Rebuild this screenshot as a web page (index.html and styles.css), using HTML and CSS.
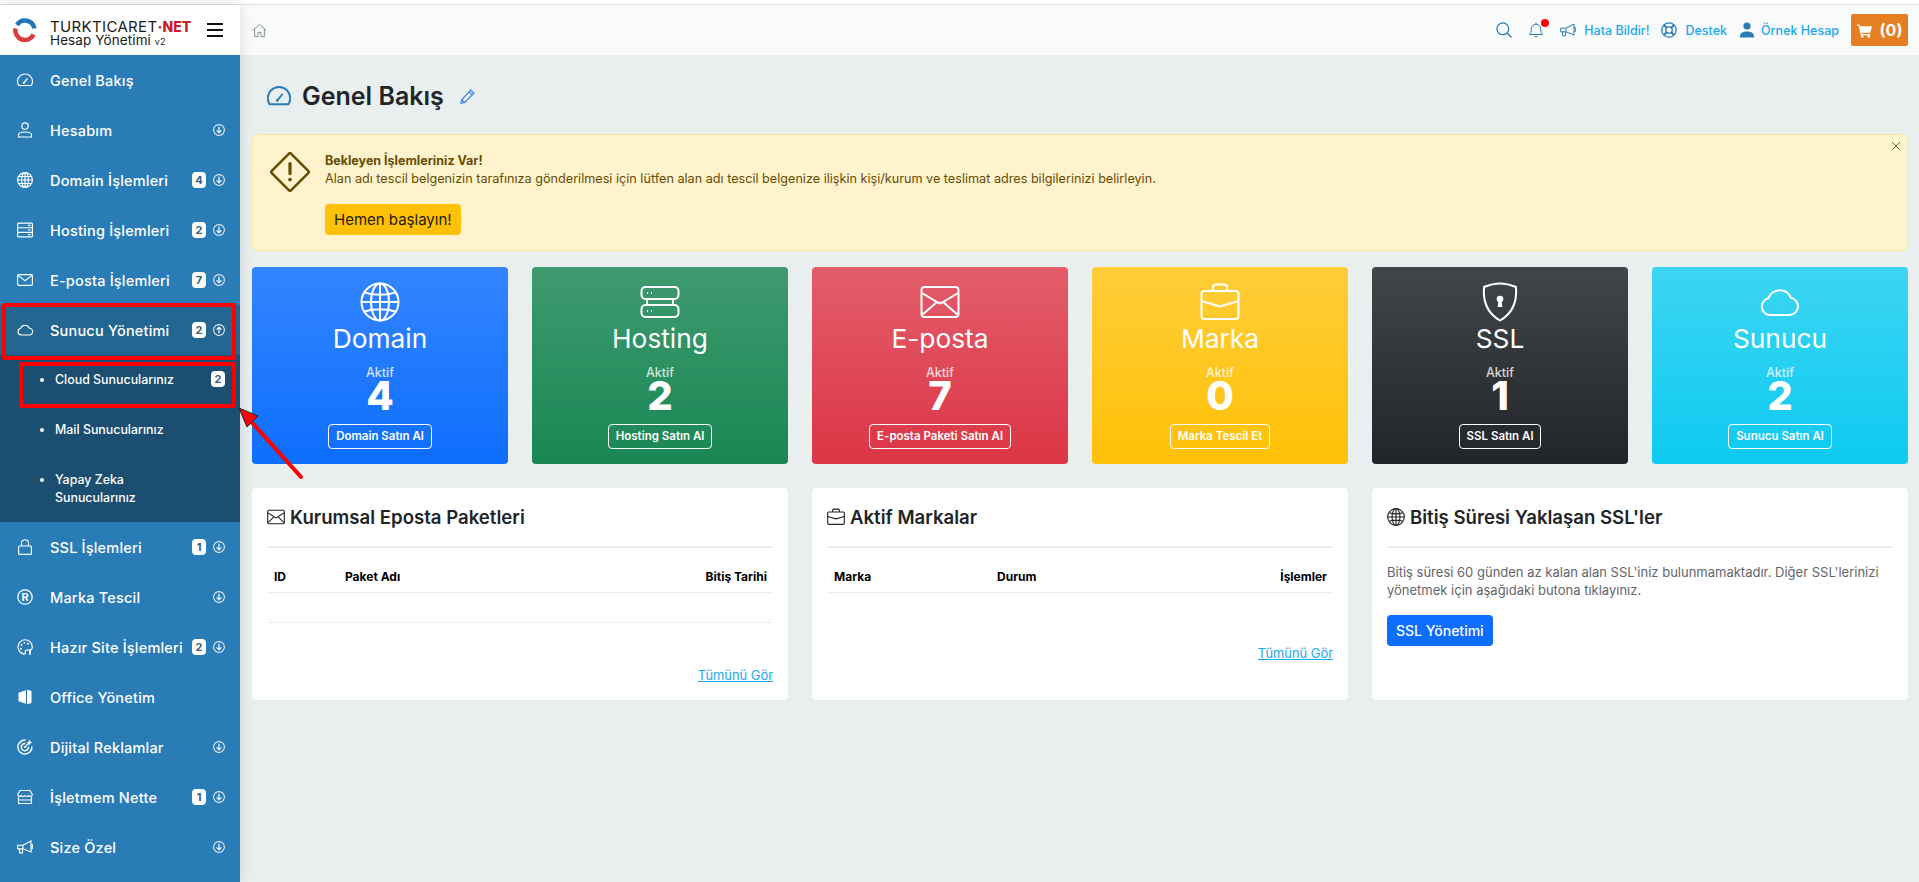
FILE: index.html
```html
<!DOCTYPE html>
<html lang="tr">
<head>
    <meta charset="utf-8">
    <title>Genel Bakış</title>
    <link rel="stylesheet" href="styles.css">
</head>
<body>
    <svg class="sprite" xmlns="http://www.w3.org/2000/svg">
        <symbol id="i-gauge" viewBox="0 0 16 16"><path d="M1.7 13.500h12.600A7.500 7.500 0 0 0 15.500 9.500 7.500 7.500 0 0 0 .5 9.500a7.500 7.500 0 0 0 1.200 4z"/><path d="M6.600 11.200 10.500 6.500" stroke-width="1.300"/><circle cx="6.800" cy="11" r=".9" class="solid"/></symbol>
        <symbol id="i-person" viewBox="0 0 16 16"><circle cx="8" cy="4" r="3.200"/><path d="M1.500 15v-2c0-2 2-3 6.500-3s6.500 1 6.500 3v2z"/></symbol>
        <symbol id="i-globe" viewBox="0 0 16 16"><circle cx="8" cy="8" r="7.400"/><ellipse cx="8" cy="8" rx="3.400" ry="7.400"/><path d="M8 .6v14.800M.6 8h14.800M1.700 4.500h12.600M1.700 11.500h12.600"/></symbol>
        <symbol id="i-rack" viewBox="0 0 16 16"><rect x=".6" y="1.100" width="14.800" height="13.800" rx="1"/><path d="M.6 5.700h14.800M.6 10.300h14.800M11 3.400h2.500M11 8h2.500M11 12.600h2.500"/></symbol>
        <symbol id="i-mail" viewBox="0 0 16 16"><rect x=".6" y="2.600" width="14.800" height="10.800" rx="1.200"/><path d="M1 3.400 8 8.800l7-5.400"/></symbol>
        <symbol id="i-mailx" viewBox="0 0 16 16"><rect x=".6" y="2" width="14.800" height="12" rx="1"/><path d="M1 4.500 8 8.800l7-4.300M1 13l5.300-5.300M15 13 9.700 7.700"/></symbol>
        <symbol id="i-cloud" viewBox="0 0 16 16"><path d="M4.200 13A3.400 3.400 0 0 1 3.700 6.300 4.600 4.600 0 0 1 12.300 6.200 3.400 3.400 0 0 1 12 13z"/></symbol>
        <symbol id="i-lock" viewBox="0 0 16 16"><rect x="1.600" y="7" width="12.800" height="8.400" rx="1"/><path d="M4.500 7V4.200a3.500 3.500 0 0 1 7 0V7"/></symbol>
        <symbol id="i-reg" viewBox="0 0 16 16"><circle cx="8" cy="8" r="7.200" stroke-width="1.300"/><text x="8" y="11.800" text-anchor="middle" class="reg-letter">R</text></symbol>
        <symbol id="i-palette" viewBox="0 0 16 16"><path d="M8 .8A7.200 7.200 0 0 0 7 15.100c1.200.1 1.600-.8 1.300-1.800-.4-1.400.4-2.300 1.700-2.300h2.500c1.800 0 2.900-1.200 2.800-3A7.200 7.200 0 0 0 8 .8z"/><circle cx="4.500" cy="6" r="1" class="solid"/><circle cx="7.500" cy="3.800" r="1" class="solid"/><circle cx="11" cy="4.800" r="1" class="solid"/><circle cx="3.800" cy="9.800" r="1" class="solid"/><path d="M13 11v4.500" stroke-width="2"/></symbol>
        <symbol id="i-office" viewBox="0 0 16 16"><path class="solid" d="M1.500 3.800 9 1.200v13.600l-7.500-2.600z"/><path class="solid" d="M10 .8 14.500 2v12L10 15.200z"/></symbol>
        <symbol id="i-target" viewBox="0 0 16 16"><path stroke-width="1.400" d="M8.500 1.100A7 7 0 1 0 14.900 7.500"/><path stroke-width="1.400" d="M8.300 4.500A3.600 3.600 0 1 0 11.500 7.700"/><circle cx="8" cy="8" r="1.100" class="solid"/><path d="M8 8l4-4" stroke-width="1.300"/><path class="solid" d="M12.500.5 13.300 2.700 15.500 3.500 13.300 4.300 12.500 6.500 11.700 4.300 9.500 3.500 11.700 2.700z"/></symbol>
        <symbol id="i-shop" viewBox="0 0 16 16"><path d="M3 1.500h10l2.300 4c0 2-2.400 2.300-3.600 1-1 1.300-2.700 1.300-3.700 0-1 1.300-2.700 1.300-3.700 0C3.100 7.800.7 7.500.7 5.500z"/><path d="M1.500 7.800v6.700h13V7.800M1.500 11h13"/></symbol>
        <symbol id="i-horn" viewBox="0 0 16 16"><path d="M.7 6.200h5.200L14 2v11L5.900 9.800H.7zM5.900 6.200v3.600M14 5.500h1.300v4H14M2.500 9.800v4h3V10"/></symbol>
        <symbol id="i-down" viewBox="0 0 16 16"><circle cx="8" cy="8" r="7.200"/><path stroke-width="1.800" d="M8 3.800v8M4.700 8.500 8 11.800l3.300-3.300"/></symbol>
        <symbol id="i-up" viewBox="0 0 16 16"><circle cx="8" cy="8" r="7.200"/><path stroke-width="1.800" d="M8 12.200v-8M4.700 7.500 8 4.200l3.300 3.300"/></symbol>
        <symbol id="i-home" viewBox="0 0 16 16"><path d="M.8 8 8 1.500 15.200 8M2.800 6.500v8h3.600v-4.500h3.200v4.500h3.600v-8"/></symbol>
        <symbol id="i-search" viewBox="0 0 16 16"><circle cx="6.800" cy="6.800" r="5.900" stroke-width="1.300"/><path stroke-width="1.500" d="m11 11 4.500 4.500"/></symbol>
        <symbol id="i-bell" viewBox="0 0 16 16"><path d="M1.500 12.500c1.200-1.200 1.800-2.500 1.800-5.500A4.700 4.700 0 0 1 8 2.200 4.700 4.700 0 0 1 12.700 7c0 3 .6 4.300 1.800 5.500zM6.300 14.800h3.400M8 .6v1.600"/></symbol>
        <symbol id="i-buoy" viewBox="0 0 16 16"><circle cx="8" cy="8" r="7.200" stroke-width="1.300"/><circle cx="8" cy="8" r="3.200" stroke-width="1.300"/><path stroke-width="2" d="m2.900 2.900 2.800 2.800M13.100 2.900l-2.800 2.800M2.900 13.100l2.800-2.800M13.100 13.100l-2.800-2.800"/></symbol>
        <symbol id="i-user" viewBox="0 0 16 16"><circle cx="8" cy="4" r="3.600" class="solid"/><path class="solid" d="M.8 15.500c0-4 2.500-6 7.200-6s7.200 2 7.200 6z"/></symbol>
        <symbol id="i-cart" viewBox="0 0 16 16"><path class="solid" d="M0 1.500h2.800l.5 2H16l-1.800 6.800H5l.3 1.300h9v1.400H4.100L1.800 2.900H0z"/><circle cx="5.500" cy="14.300" r="1.400" class="solid"/><circle cx="12.500" cy="14.300" r="1.400" class="solid"/></symbol>
        <symbol id="i-pencil" viewBox="0 0 16 16"><path d="M11.500 1.200 14.800 4.500 5 14.300l-4 .9.900-4zM9.800 3l3.300 3.300M2 11.200 4.800 14"/></symbol>
        <symbol id="i-x" viewBox="0 0 10 10"><path d="m1 1 8 8M9 1 1 9"/></symbol>
        <symbol id="i-warn" viewBox="0 0 16 16"><rect x="2.500" y="2.500" width="11" height="11" rx=".7" transform="rotate(45 8 8)"/><path stroke-width="1.300" stroke-linecap="round" d="M8 4.600v4"/><circle cx="8" cy="11" r=".75" class="solid"/></symbol>
        <symbol id="i-globe-lg" viewBox="0 0 40 40"><circle cx="20" cy="20" r="18.500"/><ellipse cx="20" cy="20" rx="9" ry="18.500"/><path d="M20 1.500v37M1.500 20h37M4.500 10.500c9 3 22 3 31 0M4.500 29.500c9-3 22-3 31 0"/></symbol>
        <symbol id="i-server-lg" viewBox="0 0 40 40"><rect x="1.500" y="5" width="37" height="12" rx="4"/><rect x="1.500" y="23" width="37" height="12" rx="4"/><path d="M7 17v6M33 17v6M7 11h1M11 11h1M7 29h1M11 29h1"/></symbol>
        <symbol id="i-mail-lg" viewBox="0 0 40 40"><rect x="1.500" y="5" width="37" height="30" rx="3"/><path d="M2 11l15 9 3 1.500 3-1.500 15-9M2 33l15-13M38 33 23 20"/></symbol>
        <symbol id="i-case-lg" viewBox="0 0 40 40"><rect x="1.500" y="9" width="37" height="28" rx="3"/><path d="M13 9V5a2.500 2.500 0 0 1 2.500-2.500h9A2.500 2.500 0 0 1 27 5v4M1.500 19 20 24.500 38.500 19"/></symbol>
        <symbol id="i-shield-lg" viewBox="0 0 40 40"><path d="M20 1.500c5 0 11 1.500 16 3.500 1 12-1 25-16 33.500C5 30 3 17 4 5c5-2 11-3.500 16-3.500z"/><circle cx="20" cy="17" r="3.300" class="solid"/><path class="solid" d="M18.600 18h2.800l1 7h-4.800z"/></symbol>
        <symbol id="i-cloud-lg" viewBox="0 0 40 40"><path d="M10 33a8.500 8.500 0 0 1-1.500-16.800A12 12 0 0 1 31 15.800 8.700 8.700 0 0 1 30 33z"/></symbol>
        <symbol id="i-case" viewBox="0 0 16 16"><rect x=".6" y="3.600" width="14.800" height="11" rx="1"/><path d="M5 3.600V2a1 1 0 0 1 1-1h4a1 1 0 0 1 1 1v1.600M.6 7.600 8 9.600l7.400-2"/></symbol>
        <symbol id="i-globe-sm" viewBox="0 0 16 16"><circle cx="8" cy="8" r="7.400"/><ellipse cx="8" cy="8" rx="3.500" ry="7.400"/><path d="M8 .6v14.800M.6 8h14.800M2 4.200c3.500 1.200 8.500 1.200 12 0M2 11.800c3.500-1.200 8.500-1.200 12 0"/></symbol>
    </svg>

    <div class="top-strip"></div>

    <div class="layout">
        <aside class="sidebar">
            <div class="brand">
                <svg class="brand-mark" viewBox="0 0 24 24">
                    <path class="mark-blue" d="M4 7A9.500 9.500 0 0 1 21.400 10.500"/>
                    <path class="mark-red" d="M20.500 16.500A9.500 9.500 0 0 1 2.600 10.500"/>
                </svg>
                <div class="brand-text">
                    <div class="brand-name">TURKTICARET<b>·NET</b></div>
                    <div class="brand-sub">Hesap Yönetimi <small>v2</small></div>
                </div>
                <div class="burger"><i></i><i></i><i></i></div>
            </div>

            <nav class="nav">
                <a class="nav-item"><svg class="nav-icon"><use href="#i-gauge"/></svg><span class="nav-label">Genel Bakış</span></a>
                <a class="nav-item"><svg class="nav-icon"><use href="#i-person"/></svg><span class="nav-label">Hesabım</span><svg class="nav-arrow"><use href="#i-down"/></svg></a>
                <a class="nav-item"><svg class="nav-icon"><use href="#i-globe"/></svg><span class="nav-label">Domain İşlemleri</span><span class="badge">4</span><svg class="nav-arrow"><use href="#i-down"/></svg></a>
                <a class="nav-item"><svg class="nav-icon"><use href="#i-rack"/></svg><span class="nav-label">Hosting İşlemleri</span><span class="badge">2</span><svg class="nav-arrow"><use href="#i-down"/></svg></a>
                <a class="nav-item"><svg class="nav-icon"><use href="#i-mail"/></svg><span class="nav-label">E-posta İşlemleri</span><span class="badge">7</span><svg class="nav-arrow"><use href="#i-down"/></svg></a>
                <a class="nav-item active"><svg class="nav-icon"><use href="#i-cloud"/></svg><span class="nav-label">Sunucu Yönetimi</span><span class="badge">2</span><svg class="nav-arrow"><use href="#i-up"/></svg></a>
                <ul class="subnav">
                    <li><span>Cloud Sunucularınız</span><span class="badge">2</span></li>
                    <li><span>Mail Sunucularınız</span></li>
                    <li><span>Yapay Zeka<br>Sunucularınız</span></li>
                </ul>
                <a class="nav-item"><svg class="nav-icon"><use href="#i-lock"/></svg><span class="nav-label">SSL İşlemleri</span><span class="badge">1</span><svg class="nav-arrow"><use href="#i-down"/></svg></a>
                <a class="nav-item"><svg class="nav-icon"><use href="#i-reg"/></svg><span class="nav-label">Marka Tescil</span><svg class="nav-arrow"><use href="#i-down"/></svg></a>
                <a class="nav-item"><svg class="nav-icon"><use href="#i-palette"/></svg><span class="nav-label">Hazır Site İşlemleri</span><span class="badge">2</span><svg class="nav-arrow"><use href="#i-down"/></svg></a>
                <a class="nav-item"><svg class="nav-icon"><use href="#i-office"/></svg><span class="nav-label">Office Yönetim</span></a>
                <a class="nav-item"><svg class="nav-icon"><use href="#i-target"/></svg><span class="nav-label">Dijital Reklamlar</span><svg class="nav-arrow"><use href="#i-down"/></svg></a>
                <a class="nav-item"><svg class="nav-icon"><use href="#i-shop"/></svg><span class="nav-label">İşletmem Nette</span><span class="badge">1</span><svg class="nav-arrow"><use href="#i-down"/></svg></a>
                <a class="nav-item"><svg class="nav-icon"><use href="#i-horn"/></svg><span class="nav-label">Size Özel</span><svg class="nav-arrow"><use href="#i-down"/></svg></a>
            </nav>
        </aside>

        <div class="main">
            <header class="topbar">
                <svg class="home-icon"><use href="#i-home"/></svg>
                <div class="top-actions">
                    <svg class="top-icon search"><use href="#i-search"/></svg>
                    <span class="bell"><svg class="top-icon"><use href="#i-bell"/></svg><i class="bell-dot"></i></span>
                    <a class="top-link"><svg class="top-icon"><use href="#i-horn"/></svg>Hata Bildir!</a>
                    <a class="top-link"><svg class="top-icon"><use href="#i-buoy"/></svg>Destek</a>
                    <a class="top-link user-link"><svg class="top-icon"><use href="#i-user"/></svg>Örnek Hesap</a>
                    <a class="cart"><svg class="cart-icon"><use href="#i-cart"/></svg>(0)</a>
                </div>
            </header>

            <div class="content">
                <div class="page-title">
                    <svg class="title-icon"><use href="#i-gauge"/></svg>
                    <h1>Genel Bakış</h1>
                    <svg class="title-edit"><use href="#i-pencil"/></svg>
                </div>

                <div class="notice">
                    <svg class="notice-icon"><use href="#i-warn"/></svg>
                    <div class="notice-body">
                        <strong>Bekleyen İşlemleriniz Var!</strong>
                        <p>Alan adı tescil belgenizin tarafınıza gönderilmesi için lütfen alan adı tescil belgenize ilişkin kişi/kurum ve teslimat adres bilgilerinizi belirleyin.</p>
                        <a class="notice-btn">Hemen başlayın!</a>
                    </div>
                    <svg class="notice-close"><use href="#i-x"/></svg>
                </div>

                <div class="stats">
                    <div class="stat blue">
                        <svg class="stat-icon"><use href="#i-globe-lg"/></svg>
                        <div class="stat-title">Domain</div>
                        <div class="stat-sub">Aktif</div>
                        <div class="stat-num">4</div>
                        <a class="stat-btn">Domain Satın Al</a>
                    </div>
                    <div class="stat green">
                        <svg class="stat-icon"><use href="#i-server-lg"/></svg>
                        <div class="stat-title">Hosting</div>
                        <div class="stat-sub">Aktif</div>
                        <div class="stat-num">2</div>
                        <a class="stat-btn">Hosting Satın Al</a>
                    </div>
                    <div class="stat red">
                        <svg class="stat-icon"><use href="#i-mail-lg"/></svg>
                        <div class="stat-title">E-posta</div>
                        <div class="stat-sub">Aktif</div>
                        <div class="stat-num">7</div>
                        <a class="stat-btn">E-posta Paketi Satın Al</a>
                    </div>
                    <div class="stat yellow">
                        <svg class="stat-icon"><use href="#i-case-lg"/></svg>
                        <div class="stat-title">Marka</div>
                        <div class="stat-sub">Aktif</div>
                        <div class="stat-num">0</div>
                        <a class="stat-btn">Marka Tescil Et</a>
                    </div>
                    <div class="stat dark">
                        <svg class="stat-icon"><use href="#i-shield-lg"/></svg>
                        <div class="stat-title">SSL</div>
                        <div class="stat-sub">Aktif</div>
                        <div class="stat-num">1</div>
                        <a class="stat-btn">SSL Satın Al</a>
                    </div>
                    <div class="stat cyan">
                        <svg class="stat-icon"><use href="#i-cloud-lg"/></svg>
                        <div class="stat-title">Sunucu</div>
                        <div class="stat-sub">Aktif</div>
                        <div class="stat-num">2</div>
                        <a class="stat-btn">Sunucu Satın Al</a>
                    </div>
                </div>

                <div class="panels">
                    <section class="panel">
                        <h2><svg class="panel-icon"><use href="#i-mailx"/></svg>Kurumsal Eposta Paketleri</h2>
                        <table class="grid-table packages">
                            <thead><tr><th>ID</th><th>Paket Adı</th><th class="right">Bitiş Tarihi</th></tr></thead>
                            <tbody><tr class="empty-row"><td colspan="3"></td></tr></tbody>
                        </table>
                        <a class="see-all">Tümünü Gör</a>
                    </section>
                    <section class="panel">
                        <h2><svg class="panel-icon"><use href="#i-case"/></svg>Aktif Markalar</h2>
                        <table class="grid-table brands">
                            <thead><tr><th>Marka</th><th>Durum</th><th class="right">İşlemler</th></tr></thead>
                            <tbody><tr class="blank-row"><td colspan="3"></td></tr></tbody>
                        </table>
                        <a class="see-all">Tümünü Gör</a>
                    </section>
                    <section class="panel">
                        <h2><svg class="panel-icon"><use href="#i-globe-sm"/></svg>Bitiş Süresi Yaklaşan SSL'ler</h2>
                        <p class="panel-text">Bitiş süresi 60 günden az kalan alan SSL'iniz bulunmamaktadır. Diğer SSL'lerinizi yönetmek için aşağıdaki butona tıklayınız.</p>
                        <a class="primary-btn">SSL Yönetimi</a>
                    </section>
                </div>
            </div>
        </div>
    </div>

    <!-- red marks drawn over the screenshot -->
    <div class="mark mark-one"></div>
    <div class="mark mark-two"></div>
    <svg class="mark-arrow" viewBox="0 0 80 80">
        <path d="M63 71 9 11" stroke="#f00" stroke-width="4" stroke-linecap="round" fill="none"/>
        <path d="M1 2 20 10 9 21z" fill="#f00"/>
    </svg>
</body>
</html>
```

FILE: styles.css
```css
* {
    box-sizing: border-box;
}

html, body {
    height: 100%;
}

body {
    margin: 0;
    font-family: Inter, "Noto Sans", sans-serif;
    color: #212529;
    background: #e9efef;
    overflow: hidden;
}

a {
    text-decoration: none;
}

.sprite {
    display: none;
}

svg {
    fill: none;
    stroke: currentColor;
    stroke-width: 1;
    flex-shrink: 0;
}

.solid {
    fill: currentColor;
    stroke: none;
}

.reg-letter {
    font: 700 11px Inter, sans-serif;
    fill: currentColor;
    stroke: none;
}

.top-strip {
    height: 5px;
    background: #fff;
    border-bottom: 1px solid #dfe1e1;
}

.layout {
    display: flex;
    height: 877px;
}

/* sidebar */
.sidebar {
    width: 240px;
    flex-shrink: 0;
    background: #2a7cb6;
    box-shadow: 0 0 12px rgba(0, 0, 0, .14);
    position: relative;
}

.brand {
    height: 50px;
    background: #fff;
    display: flex;
    align-items: center;
    padding: 0 17px 0 13px;
}

.brand-mark {
    width: 24px;
    height: 24px;
    margin-right: 13px;
}

.mark-blue {
    stroke: #1f76bb;
    stroke-width: 4.500;
}

.mark-red {
    stroke: #dd3c3f;
    stroke-width: 4.500;
}

.brand-text {
    flex: 1;
    padding-top: 7px;
    color: #1a1a1a;
}

.brand-name {
    font-size: 15px;
    line-height: 15px;
    letter-spacing: .35px;
    white-space: nowrap;
}

.brand-name b {
    color: #c8202a;
    font-size: 14px;
    font-weight: 800;
    letter-spacing: 0;
}

.brand-sub {
    font-size: 13.500px;
    line-height: 14px;
    letter-spacing: .1px;
    margin-top: -1px;
}

.brand-sub small {
    font-size: 9px;
}

.burger {
    width: 16px;
}

.burger i {
    display: block;
    height: 2px;
    background: #111;
    margin: 4px 0;
}

.nav-item {
    display: flex;
    align-items: center;
    height: 50px;
    padding: 0 15px 0 17px;
    color: #fff;
}

.nav-item.active {
    background: #246692;
}

.nav-icon {
    width: 16px;
    height: 16px;
    margin-right: 17px;
    stroke-width: 1.150;
}

.nav-label {
    flex: 1;
    padding-top: 1px;
    font-size: 14.500px;
    font-weight: 500;
    letter-spacing: .2px;
    white-space: nowrap;
}

.nav-arrow {
    width: 12px;
    height: 12px;
    margin-left: 7px;
    stroke-width: 1.400;
    opacity: .9;
}

.badge {
    min-width: 14px;
    height: 16px;
    padding: 0 3px;
    border-radius: 4px;
    background: #fff;
    color: #3a5d78;
    font-size: 11px;
    font-weight: 700;
    line-height: 16px;
    text-align: center;
}

.subnav {
    margin: 0;
    padding: 0 15px 0 0;
    list-style: none;
    background: #1b4e71;
    color: #fff;
    font-size: 12.400px;
    font-weight: 500;
}

.subnav li {
    display: flex;
    justify-content: space-between;
    padding: 16px 0 16px 55px;
    line-height: 18px;
    position: relative;
}

.subnav li:last-child {
    padding-bottom: 15px;
}

.subnav li::before {
    content: "";
    position: absolute;
    left: 40px;
    top: 23px;
    width: 4px;
    height: 4px;
    border-radius: 50%;
    background: #fff;
}

/* top bar */
.main {
    flex: 1;
    min-width: 0;
}

.topbar {
    height: 50px;
    background: #f9fbfb;
    display: flex;
    align-items: center;
    justify-content: space-between;
    padding: 0 11px 0 12px;
}

.home-icon {
    width: 15px;
    height: 15px;
    color: #7d8589;
}

.top-actions {
    display: flex;
    align-items: center;
}

.top-icon {
    width: 16px;
    height: 16px;
    color: #2a7cb6;
}

.search {
    margin-right: 16px;
}

.bell {
    position: relative;
    display: flex;
    margin-right: 16px;
}

.bell-dot {
    position: absolute;
    top: -3px;
    right: -5px;
    width: 8px;
    height: 8px;
    border-radius: 50%;
    background: #f00;
}

.top-link {
    display: flex;
    align-items: center;
    gap: 8px;
    margin-right: 12px;
    font-size: 12.500px;
    font-weight: 500;
    color: #1ea7f0;
    white-space: nowrap;
}

.user-link {
    gap: 6px;
}

.cart {
    display: flex;
    align-items: center;
    justify-content: center;
    gap: 8px;
    width: 57px;
    height: 32px;
    border-radius: 2px;
    background: #e67e22;
    color: #fff;
    font-size: 16px;
    font-weight: 700;
}

.cart-icon {
    width: 15px;
    height: 15px;
    color: #fff;
}

/* content */
.content {
    padding: 0 11px 0 12px;
}

.page-title {
    display: flex;
    align-items: center;
    height: 79px;
    padding: 3px 0 0 15px;
}

.title-icon {
    width: 24px;
    height: 24px;
    color: #2a7cb6;
    margin-right: 11px;
    stroke-width: 1.300;
}

.page-title h1 {
    margin: 0;
    font-size: 25px;
    font-weight: 600;
    line-height: 30px;
}

.title-edit {
    width: 15px;
    height: 15px;
    color: #3d7ff5;
    margin-left: 16px;
    stroke-width: 1.300;
}

.notice {
    display: flex;
    position: relative;
    height: 117px;
    padding: 17px 15px 0 17px;
    background: #fff3cd;
    border: 1px solid #ffe69c;
    border-radius: 5px;
    color: #664d03;
}

.notice-icon {
    width: 40px;
    height: 40px;
    margin-right: 15px;
}

.notice-body {
    font-size: 12.650px;
    line-height: 18px;
}

.notice-body strong {
    display: block;
    font-weight: 700;
    font-size: 12.500px;
}

.notice-body p {
    margin: 0 0 16px;
}

.notice-btn {
    display: inline-block;
    height: 31px;
    padding: 0 9px;
    border-radius: 4px;
    background: #ffc107;
    color: #1d1a05;
    font-size: 15px;
    line-height: 31px;
}

.notice-close {
    position: absolute;
    top: 6px;
    right: 6px;
    width: 10px;
    height: 10px;
    color: #5c5c4c;
}

.stats {
    display: grid;
    grid-template-columns: repeat(6, 1fr);
    gap: 24px;
    margin-top: 16px;
}

.stat {
    height: 197px;
    border-radius: 4px;
    padding-top: 15px;
    color: #fff;
    text-align: center;
}

.stat.blue { background: linear-gradient(#3385ff, #0d6efd); }
.stat.green { background: linear-gradient(#3f9a6f, #198754); }
.stat.red { background: linear-gradient(#e35d6a, #dc3545); }
.stat.yellow { background: linear-gradient(#ffcd39, #ffc107); }
.stat.dark { background: linear-gradient(#424649, #212529); }
.stat.cyan { background: linear-gradient(#3dd5f3, #0dcaf0); }

.stat-icon {
    display: block;
    width: 40px;
    height: 40px;
    margin: 0 auto;
    stroke-width: 2;
}

.stat-title {
    font-size: 26.300px;
    line-height: 36px;
    font-weight: 400;
    margin-top: -1px;
}

.stat-sub {
    margin-top: 8px;
    font-size: 12.500px;
    line-height: 16px;
    font-weight: 500;
    opacity: .8;
}

.stat-num {
    font-size: 40px;
    line-height: 30px;
    font-weight: 800;
}

.stat-btn {
    display: block;
    width: max-content;
    height: 25px;
    margin: 13px auto 0;
    padding: 0 7px;
    border: 1px solid #fff;
    border-radius: 4px;
    font-size: 11.500px;
    line-height: 23px;
    font-weight: 600;
    color: #fff;
}

.panels {
    display: grid;
    grid-template-columns: repeat(3, 1fr);
    gap: 24px;
    margin-top: 24px;
}

.panel {
    height: 212px;
    padding: 15px;
    border-radius: 5px;
    background: #fff;
}

.panel h2 {
    display: flex;
    align-items: center;
    gap: 5px;
    margin: 0;
    padding-bottom: 15px;
    border-bottom: 2px solid #e9efef;
    font-size: 18.600px;
    font-weight: 600;
    line-height: 28px;
    box-sizing: content-box;
    height: 28px;
}

.panel-icon {
    width: 18px;
    height: 18px;
}

.grid-table {
    width: 100%;
    margin-top: 14px;
    border-collapse: collapse;
    font-size: 12px;
}

.grid-table th {
    padding: 6px 6px 6px 7px;
    line-height: 18px;
    font-weight: 700;
    text-align: left;
    color: #000;
    border-bottom: 1px solid #e9efef;
}

.grid-table th.right {
    text-align: right;
}

.packages th:first-child {
    width: 71px;
}

.brands th:first-child {
    width: 163px;
}

.empty-row td {
    height: 30px;
    border-bottom: 1px solid #e9efef;
}

.blank-row td {
    height: 8px;
}

.see-all {
    display: block;
    width: max-content;
    margin: 44px 0 0 auto;
    font-size: 12.900px;
    line-height: 18px;
    color: #1ea7f0;
    text-decoration: underline;
}

.panel-text {
    margin: 15px 0 0;
    font-size: 13px;
    line-height: 18px;
    color: #5f666d;
}

.primary-btn {
    display: inline-block;
    height: 31px;
    margin-top: 16px;
    padding: 0 9px;
    border-radius: 4px;
    background: #0d6efd;
    color: #fff;
    font-size: 14px;
    font-weight: 500;
    line-height: 31px;
}

/* annotation */
.mark {
    position: absolute;
    border: 4px solid #f00;
    border-radius: 2px;
}

.mark-one {
    left: 2px;
    top: 303px;
    width: 234px;
    height: 57px;
}

.mark-two {
    left: 19px;
    top: 362px;
    width: 217px;
    height: 46px;
}

.mark-arrow {
    position: absolute;
    left: 238px;
    top: 406px;
    width: 80px;
    height: 80px;
}
```
